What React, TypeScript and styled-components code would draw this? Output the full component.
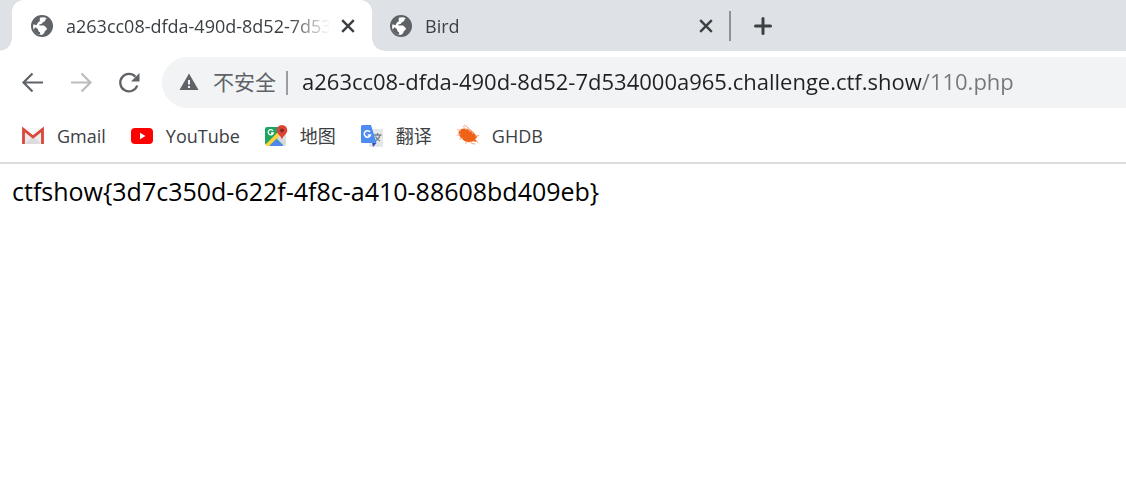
import React from "react";
import styled, { createGlobalStyle } from "styled-components";

const font = `"Open Sans", "Noto Sans CJK SC", sans-serif`;

const GlobalStyle = createGlobalStyle`
  * { box-sizing: border-box; }
  body { margin: 0; background: #fff; font-family: ${font}; color: #000; }
  button, input { font: inherit; color: inherit; border: 0; padding: 0; margin: 0; background: none; }
  svg { display: block; flex: none; }
`;

const TabStrip = styled.div`
  display: flex;
  align-items: stretch;
  height: 51px;
  padding-left: 12px;
  background: #dee1e6;
`;

const Tab = styled.div<{ $active?: boolean }>`
  position: relative;
  display: flex;
  align-items: center;
  width: ${(p) => (p.$active ? 360 : 357)}px;
  flex: none;
  padding: 0 ${(p) => (p.$active ? 16 : 15)}px 0 ${(p) => (p.$active ? 18 : 17)}px;
  border-radius: 12px 12px 0 0;
  background: ${(p) => (p.$active ? "#fff" : "transparent")};
  color: #3c4043;

  &::before,
  &::after {
    content: "";
    display: ${(p) => (p.$active ? "block" : "none")};
    position: absolute;
    bottom: 0;
    width: 12px;
    height: 12px;
  }
  &::before {
    right: 100%;
    background: radial-gradient(circle at 0 0, #dee1e6 11px, #fff 12px);
  }
  &::after {
    left: 100%;
    background: radial-gradient(circle at 100% 0, #dee1e6 11px, #fff 12px);
  }
`;

const TabTitle = styled.span`
  flex: 1;
  min-width: 0;
  margin: 0 10px 0 12px;
  overflow: hidden;
  white-space: nowrap;
  font-size: 18px;
  line-height: 28px;
  mask-image: linear-gradient(to left, transparent, #000 40px);
`;

const IconButton = styled.button<{ $size: number }>`
  display: flex;
  align-items: center;
  justify-content: center;
  flex: none;
  width: ${(p) => p.$size}px;
  height: ${(p) => p.$size}px;
  border-radius: 50%;
`;

const Divider = styled.span<{ $height: number; $color: string }>`
  flex: none;
  align-self: center;
  width: 2px;
  height: ${(p) => p.$height}px;
  background: ${(p) => p.$color};
`;

const NewTab = styled.div`
  display: flex;
  align-items: center;
  padding-left: 16px;
`;

const Toolbar = styled.div`
  display: flex;
  align-items: center;
  padding: 6px 0 6px 9px;
`;

const NavButtons = styled.div`
  display: flex;
  flex: none;
  width: 153px;
`;

const AddressBar = styled.div`
  display: flex;
  align-items: center;
  flex: 1;
  min-width: 0;
  height: 51px;
  padding-left: 16px;
  border-radius: 26px 0 0 26px;
  background: #f1f3f4;
`;

const SecurityChip = styled.button`
  display: flex;
  align-items: center;
  gap: 13px;
  flex: none;
  margin-right: 10px;
  padding-bottom: 1px;
  font-size: 21px;
  line-height: 30px;
  color: #5f6368;
`;

const UrlInput = styled.input`
  flex: 1;
  min-width: 0;
  height: 36px;
  margin-left: 14px;
  padding-bottom: 3px;
  font-size: 22px;
  outline: none;
  background: linear-gradient(to right, #202124 620px, #74777b 620px);
  background-clip: text;
  -webkit-text-fill-color: transparent;
`;

const Bookmarks = styled.nav`
  display: flex;
  align-items: center;
  gap: 24px;
  height: 50px;
  padding: 0 21px 4px;
  border-bottom: 2px solid #dadce0;
`;

const Bookmark = styled.a`
  display: flex;
  align-items: center;
  gap: 12px;
  font-size: 18px;
  line-height: 28px;
  color: #3c4043;
  text-decoration: none;
`;

const Page = styled.main`
  padding: 9px 12px;
  font-size: 25px;
  line-height: 36px;
`;

const Globe = () => (
  <svg width="24" height="24" viewBox="0 0 24 24" aria-hidden="true">
    <circle cx="12" cy="12" r="11" fill="#5f6368" />
    <path
      d="M9.800 3.800C12 3 14.800 3 16.700 4.200L15.400 5.700C15.400 7.500 13.800 7.900 12.600 8.400 12.300 10 10.500 10 9.300 10.200L9.500 11.600H13.400C15.300 11.600 15.200 13.500 16.600 13.700 17.600 15.200 16 16.300 14.900 16.900 14.600 19 13 20.700 10.700 21 6.500 20.500 3.200 17 3.100 12.800L3.400 10.300 6.500 11.200C7.500 9.500 7.500 8 9.800 7.200z"
      fill="#fff"
    />
    <path d="M5.500 13.300 7.500 14.800C8.500 16 8 17.800 10 18.300L10.300 20.800C7 20.500 4.500 18.500 3.600 15.500z" fill="#5f6368" />
  </svg>
);

const Cross = () => (
  <svg width="16" height="16" viewBox="0 0 16 16" fill="none" stroke="#3c4043" strokeWidth="2.4" aria-hidden="true">
    <path d="m2.200 2.200 11.600 11.600M13.800 2.200 2.200 13.800" />
  </svg>
);

const Arrow = ({ forward }: { forward?: boolean }) => (
  <svg width="24" height="24" viewBox="0 0 24 24" fill="none" stroke={forward ? "#babcbe" : "#5f6368"} strokeWidth="2.200" aria-hidden="true">
    {forward ? <path d="M2 11.500h19M12.500 2.500l9 9-9 9" /> : <path d="M22 11.500H3M11.500 2.500l-9 9 9 9" />}
  </svg>
);

const GmailIcon = () => (
  <svg width="24" height="24" viewBox="0 0 24 24" aria-hidden="true">
    <rect x="1" y="4" width="22" height="16" rx="1.500" fill="#ececec" />
    <path d="M4 20 12 12l8 8z" fill="#dcdcdc" />
    <path d="M3 4h18l-9 7z" fill="#f7f7f7" />
    <path d="M2.500 20V5.500L12 13l9.500-7.500V20" fill="none" stroke="#d9483b" strokeWidth="2.800" />
  </svg>
);

const YouTubeIcon = () => (
  <svg width="24" height="24" viewBox="0 0 24 24" aria-hidden="true">
    <rect x="1" y="4" width="22" height="16" rx="4" fill="#f00" />
    <path d="M10 8.800v6.400l5.500-3.200z" fill="#fff" />
  </svg>
);

const MapsIcon = () => (
  <svg width="24" height="24" viewBox="0 0 24 24" aria-hidden="true">
    <path d="M3 3h18v18H3a2 2 0 0 1-2-2V5a2 2 0 0 1 2-2z" fill="#1fa463" />
    <path d="M19 7 22 10V19L11.500 11z" fill="#dfe1e3" />
    <path d="M5 22 12 14.500 19.500 22z" fill="#4d86ec" />
    <path d="m12.500 14.500 3-3L22 18v2a2 2 0 0 1-2 2z" fill="#d5d7d9" />
    <path d="M1.500 20.500 18 4l2 3.500L5 22H3z" fill="#fdd33c" />
    <path d="M9 6.800A2.600 2.600 0 1 0 9.300 9H7" fill="none" stroke="#fff" strokeWidth="1.300" />
    <path d="M18 1a5.300 5.300 0 0 0-5.300 5.300c0 4 4 5 5.300 9 1.300-4 5.300-5 5.300-9A5.300 5.300 0 0 0 18 1z" fill="#dc4437" />
    <circle cx="18" cy="6.300" r="1.900" fill="#812a22" />
  </svg>
);

const TranslateIcon = () => (
  <svg width="24" height="24" viewBox="0 0 24 24" aria-hidden="true">
    <rect x="9" y="5" width="14" height="18" rx="1.500" fill="#e6e7e8" />
    <path d="M13.500 11h8M17.500 9v2M20 11c-.8 3-3 5-5.500 6.500M15.500 12.500c.8 2 2.500 3.500 4.500 4.500" fill="none" stroke="#74848c" strokeWidth="1.300" />
    <path d="m12 18.500 4.500.5-3.500 4z" fill="#3650b5" />
    <path d="M2.500 1H11l5.500 18H2.500A1.500 1.500 0 0 1 1 17.500v-15A1.500 1.500 0 0 1 2.500 1z" fill="#4d8cf0" />
    <path d="M10 8a3.200 3.200 0 1 0 .5 3H7.800" fill="none" stroke="#fff" strokeWidth="1.500" />
  </svg>
);

const BugIcon = () => (
  <svg width="24" height="24" viewBox="0 0 24 24" aria-hidden="true">
    <path d="M2.500 8.500C3 5.500 6.500 4 10 4.800 14 5.600 17.500 7.500 19 10.200L21.500 12.800 19.500 14.800 20.800 18 17 17.300C13 19.500 8.500 18 5.500 14.500 3.500 12.500 2.500 10.500 2.500 8.500z" fill="#ee6317" />
    <path d="M5 7 1 5.500M10 6 7 2M14 8 11 2.500 8 1.500M17 10l-2-4-3-2M4.500 10 .8 11.500M7 14l-4 1.200M11 17l-1.500 3M14 17l1.500 2.500 4 .500M19 12l4.200-.500M19 15l3 4" fill="none" stroke="#f5b08a" strokeWidth="1" />
  </svg>
);

const bookmarks = [
  { label: "Gmail", href: "#gmail", Icon: GmailIcon },
  { label: "YouTube", href: "#youtube", Icon: YouTubeIcon },
  { label: "地图", href: "#maps", Icon: MapsIcon },
  { label: "翻译", href: "#translate", Icon: TranslateIcon },
  { label: "GHDB", href: "#ghdb", Icon: BugIcon },
];

export default function App() {
  return (
    <>
      <GlobalStyle />
      <TabStrip>
        <Tab $active>
          <Globe />
          <TabTitle>a263cc08-dfda-490d-8d52-7d534000a965</TabTitle>
          <IconButton $size={16} aria-label="Close tab"><Cross /></IconButton>
        </Tab>
        <Tab>
          <Globe />
          <TabTitle>Bird</TabTitle>
          <IconButton $size={16} aria-label="Close tab"><Cross /></IconButton>
        </Tab>
        <Divider $height={30} $color="#8e9195" />
        <NewTab>
          <IconButton $size={32} aria-label="New tab">
            <svg width="20" height="20" viewBox="0 0 20 20" stroke="#3c4043" strokeWidth="3" strokeLinecap="round"><path d="M10 2.500v15M2.500 10h15" /></svg>
          </IconButton>
        </NewTab>
      </TabStrip>
      <Toolbar>
        <NavButtons>
          <IconButton $size={48} aria-label="Back"><Arrow /></IconButton>
          <IconButton $size={48} aria-label="Forward"><Arrow forward /></IconButton>
          <IconButton $size={48} aria-label="Reload">
            <svg width="24" height="24" viewBox="0 0 24 24"><path d="M20.200 14.500a8.700 8.700 0 1 1-1.800-8.700" fill="none" stroke="#5f6368" strokeWidth="2.300" /><path d="M22.500 2v8.500H14z" fill="#5f6368" /></svg>
          </IconButton>
        </NavButtons>
        <AddressBar>
          <SecurityChip>
            <svg width="22" height="20" viewBox="0 0 22 20"><path d="M11 1.500 20.500 18H1.500z" fill="#5f6368" /><path d="M10 8h2v4.500h-2zM10 14h2v2h-2z" fill="#f1f3f4" /></svg>
            不安全
          </SecurityChip>
          <Divider $height={24} $color="#9a9da1" />
          <UrlInput
            aria-label="Address"
            defaultValue="a263cc08-dfda-490d-8d52-7d534000a965.challenge.ctf.show/110.php"
            spellCheck={false}
          />
        </AddressBar>
      </Toolbar>
      <Bookmarks>
        {bookmarks.map(({ label, href, Icon }) => (
          <Bookmark key={label} href={href}>
            <Icon />
            {label}
          </Bookmark>
        ))}
      </Bookmarks>
      <Page>ctfshow&#123;3d7c350d-622f-4f8c-a410-88608bd409eb&#125;</Page>
    </>
  );
}
